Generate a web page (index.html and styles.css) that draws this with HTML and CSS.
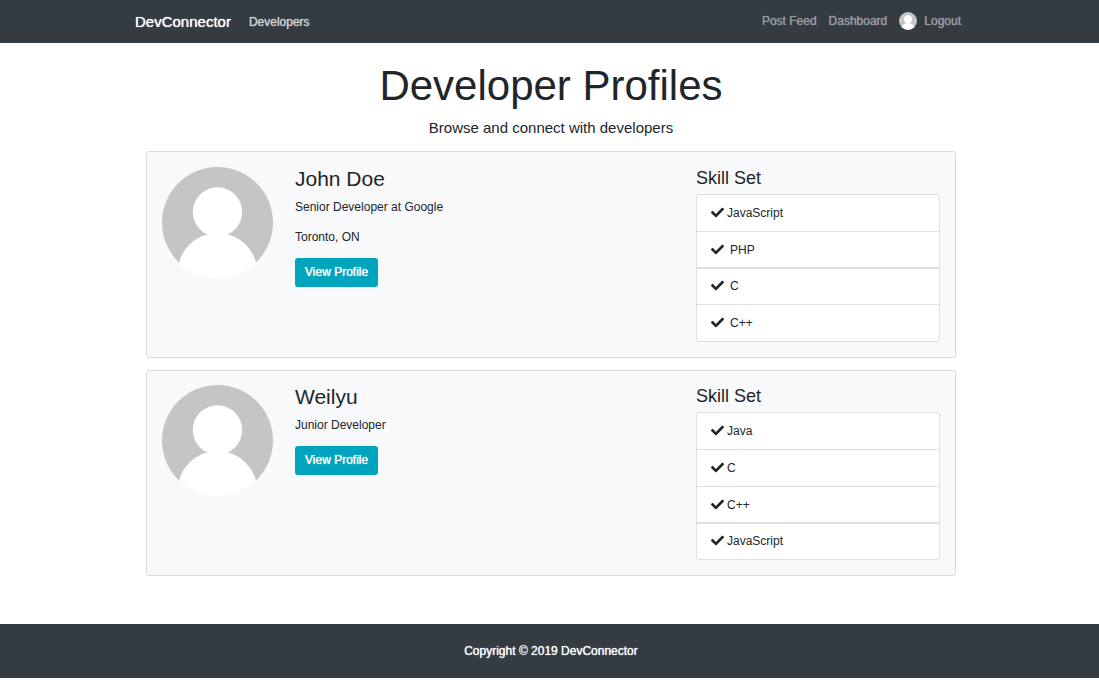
FILE: index.html
```html
<!DOCTYPE html>
<html lang="en">
<head>
<meta charset="utf-8">
<meta name="viewport" content="width=device-width, initial-scale=1">
<title>DevConnector</title>
<link rel="stylesheet" href="styles.css">
</head>
<body>
<svg class="defs" aria-hidden="true">
  <symbol id="check" viewBox="0 0 512 512"><path d="M173.898 439.404l-166.4-166.4c-9.997-9.997-9.997-26.206 0-36.204l36.203-36.204c9.997-9.998 26.207-9.998 36.204 0L192 312.69 432.095 72.596c9.997-9.997 26.207-9.997 36.204 0l36.203 36.204c9.997 9.997 9.997 26.206 0 36.204l-294.4 294.401c-9.998 9.997-26.207 9.997-36.204-.001z"/></symbol>
  <symbol id="person" viewBox="0 0 111 111"><rect width="111" height="96" fill="#c5c5c5"/><g fill="#fff"><circle cx="55.5" cy="45" r="24.700"/><circle cx="55.5" cy="106" r="40"/></g></symbol>
</svg>
<nav class="navbar">
  <div class="navbar-inner">
    <a class="brand" href="#">DevConnector</a>
    <a class="nav-link nav-link-active" href="#">Developers</a>
    <div class="nav-right">
      <a class="nav-link" href="#">Post Feed</a>
      <a class="nav-link" href="#">Dashboard</a>
      <a class="nav-link logout" href="#"><svg class="avatar avatar-small" aria-hidden="true"><use href="#person"/></svg>Logout</a>
    </div>
  </div>
</nav>
<main class="container">
  <h1 class="title">Developer Profiles</h1>
  <p class="lead">Browse and connect with developers</p>
  <section class="card">
    <svg class="avatar" role="img" aria-label="John Doe"><use href="#person"/></svg>
    <div class="info">
      <h3 class="name">John Doe</h3>
      <p class="text">Senior Developer at Google</p>
      <p class="text">Toronto, ON</p>
      <a class="btn" href="#">View Profile</a>
    </div>
    <div class="skills">
      <h4 class="skills-title">Skill Set</h4>
      <ul class="list">
        <li class="item"><svg class="check" aria-hidden="true"><use href="#check"/></svg>JavaScript</li>
        <li class="item spaced"><svg class="check" aria-hidden="true"><use href="#check"/></svg>PHP</li>
        <li class="item spaced divided"><svg class="check" aria-hidden="true"><use href="#check"/></svg>C</li>
        <li class="item spaced"><svg class="check" aria-hidden="true"><use href="#check"/></svg>C++</li>
      </ul>
    </div>
  </section>
  <section class="card">
    <svg class="avatar" role="img" aria-label="Weilyu"><use href="#person"/></svg>
    <div class="info">
      <h3 class="name">Weilyu</h3>
      <p class="text">Junior Developer</p>
      <a class="btn" href="#">View Profile</a>
    </div>
    <div class="skills">
      <h4 class="skills-title">Skill Set</h4>
      <ul class="list">
        <li class="item"><svg class="check" aria-hidden="true"><use href="#check"/></svg>Java</li>
        <li class="item"><svg class="check" aria-hidden="true"><use href="#check"/></svg>C</li>
        <li class="item"><svg class="check" aria-hidden="true"><use href="#check"/></svg>C++</li>
        <li class="item divided"><svg class="check" aria-hidden="true"><use href="#check"/></svg>JavaScript</li>
      </ul>
    </div>
  </section>
</main>
<footer class="footer">Copyright © 2019 DevConnector</footer>
</body>
</html>
```
FILE: styles.css
```css
* { box-sizing: border-box; }
body {
  margin: 0;
  background: #fff;
  color: #212529;
  font: 12px/18px "Liberation Sans", Arial, sans-serif;
}
.defs { display: none; }
h1, h3, h4, p, ul { margin: 0; padding: 0; font-weight: 400; }
a { text-decoration: none; }

.navbar { background: #343b41; padding: 0 16px; }
.navbar-inner {
  display: flex;
  align-items: center;
  max-width: 829px;
  min-height: 43px;
  margin: 0 auto;
}
.brand {
  color: #fff;
  font-size: 15px;
  margin-right: 18px;
  text-shadow: 0 0 1px #fff;
}
.nav-link { color: #999c9f; text-shadow: 0 0 1px #999c9f; }
.nav-link-active { color: #d0d2d3; text-shadow: 0 0 1px #d0d2d3; }
.nav-right {
  display: flex;
  align-items: center;
  gap: 12px;
  margin-left: auto;
  padding: 0 3px 1px 0;
}
.logout { display: flex; align-items: center; gap: 7px; }

.avatar { display: block; width: 111px; height: 111px; border-radius: 50%; }
.avatar-small { width: 18px; height: 18px; }

.container {
  max-width: 843px;
  margin: 0 auto;
  padding: 18px 15px 48px 18px;
}
.title { font-size: 42px; line-height: 50px; text-align: center; }
.lead { margin: 7px 0 13px; font-size: 15px; line-height: 20px; text-align: center; }

.card {
  display: grid;
  grid-template-columns: 111px 1fr 244px;
  gap: 22px;
  align-items: start;
  padding: 15px;
  border: 1px solid #d8dbde;
  border-radius: 3px;
  background: #f8f9fb;
}
.card + .card { margin-top: 12px; padding-top: 14px; }
.name { font-size: 21px; line-height: 24px; margin-bottom: 7px; }
.text { margin-bottom: 12px; }
.btn {
  display: inline-block;
  padding: 5px 10px 6px;
  border-radius: 3px;
  background: #00a5bd;
  color: #fff;
  text-shadow: 0 0 1px #fff;
}
.skills-title { font-size: 18px; line-height: 22px; margin-bottom: 5px; }
.list {
  list-style: none;
  border: 1px solid #dedfe0;
  border-radius: 3px;
  background: #fff;
}
.item { display: flex; align-items: center; gap: 3px; padding: 9px 14px; }
.item + .item { border-top: 1px solid #dedfe0; }
.item + .divided { margin-top: -1px; padding-top: 8px; border-top-width: 2px; }
.spaced { gap: 6px; }
.check { width: 13px; height: 13px; margin-bottom: 1px; fill: #212529; }

.footer {
  padding: 18px 16px 18px 19px;
  background: #343b41;
  color: #fff;
  text-align: center;
  text-shadow: 0 0 1px #fff;
}
```
